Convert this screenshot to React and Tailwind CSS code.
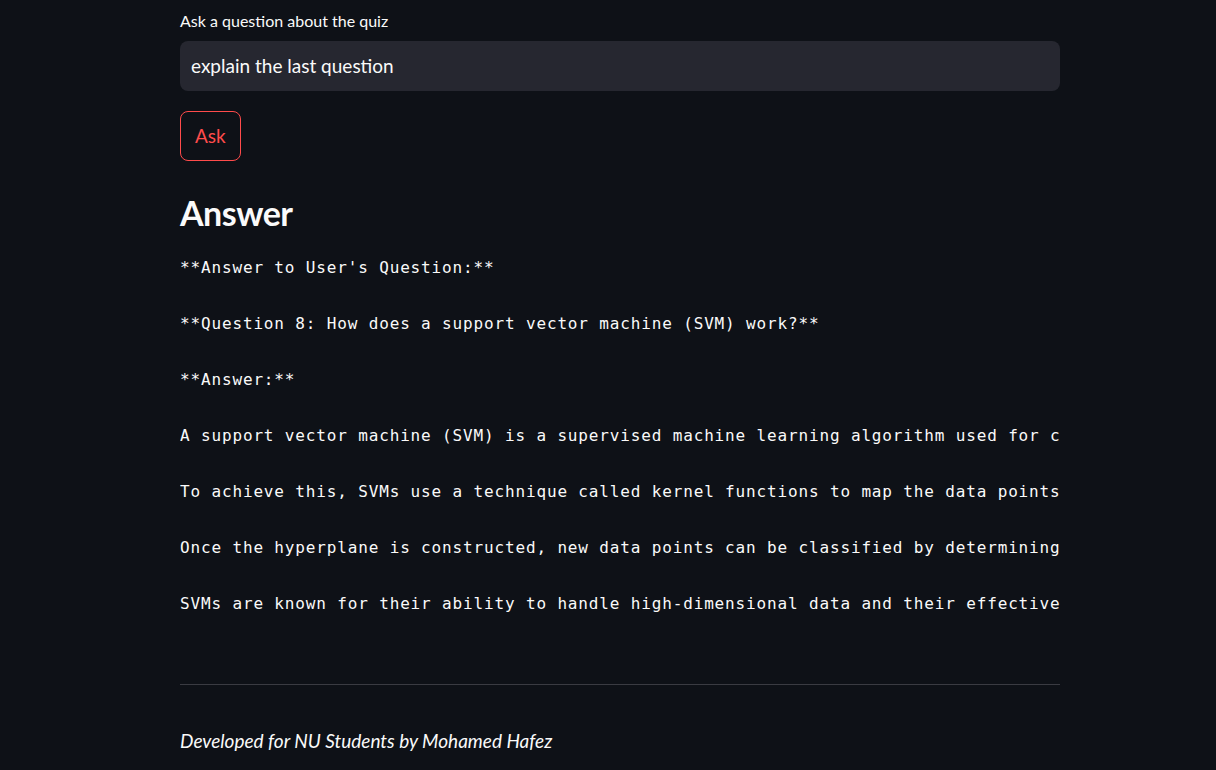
export default function App() {
  const lines = [
    "**Answer to User's Question:**",
    "**Question 8: How does a support vector machine (SVM) work?**",
    "**Answer:**",
    "A support vector machine (SVM) is a supervised machine learning algorithm used for classification and regression tasks.",
    "To achieve this, SVMs use a technique called kernel functions to map the data points into a higher-dimensional space.",
    "Once the hyperplane is constructed, new data points can be classified by determining which side of the hyperplane they fall on.",
    "SVMs are known for their ability to handle high-dimensional data and their effectiveness in many applications.",
  ];

  return (
    <div className="min-h-[770px] bg-[#0e1117] text-[#fafafa] font-['Lato','Noto_Sans',sans-serif]">
      <div className="w-[880px] ml-[180px] pt-[10px]">
        <label className="block text-[16px] leading-[22px] mb-[9px]">Ask a question about the quiz</label>
        <div className="h-[50px] bg-[#262730] rounded-lg flex items-center px-[11px] text-[19px]">
          explain the last question
        </div>

        <button className="mt-[20px] h-[50px] px-[14px] rounded-lg border border-[#ff4b4b] text-[#ff4b4b] text-[19px]">
          Ask
        </button>

        <h2 className="mt-[32px] text-[34px] font-bold leading-[40px] tracking-[-0.5px]">Answer</h2>

        <div className="mt-[21px] overflow-hidden font-['DejaVu_Sans_Mono',monospace] text-[16px] tracking-[0.85px]">
          {lines.map((l, i) => (
            <div key={i} className="h-[56px] leading-[28px] whitespace-pre">
              {l}
            </div>
          ))}
        </div>

        <hr className="mt-[38px] border-0 border-t border-[#3a3b42]" />

        <p className="mt-[42px] italic text-[19px] leading-[28px]">Developed for NU Students by Mohamed Hafez</p>
      </div>
    </div>
  );
}
